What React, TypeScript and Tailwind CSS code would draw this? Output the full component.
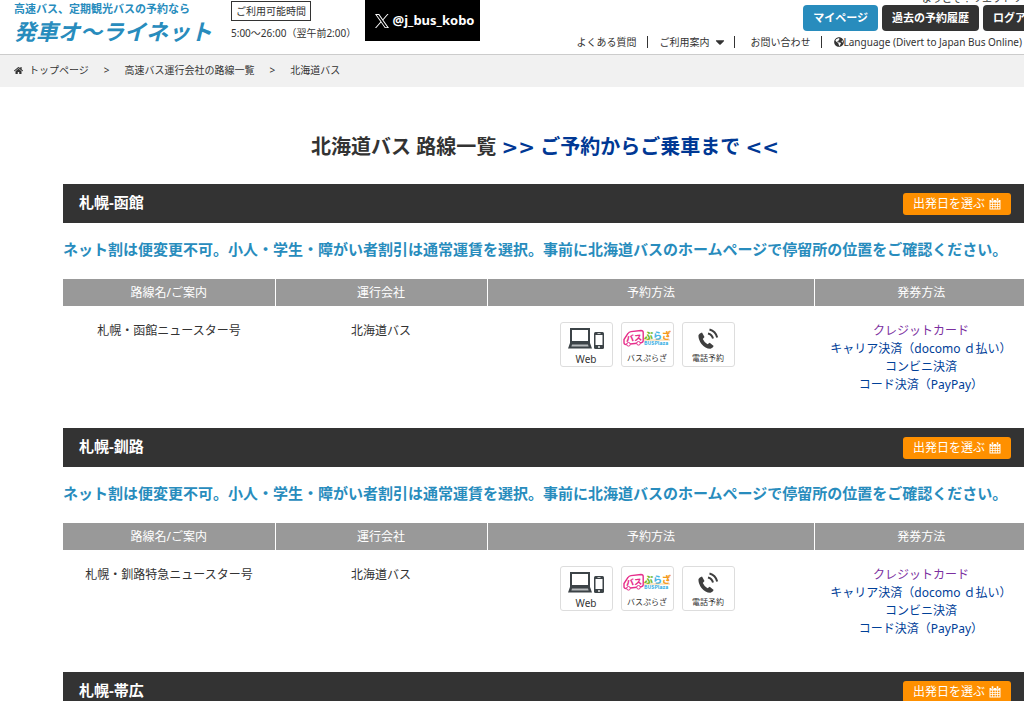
import { FaCaretDown, FaGlobeAmericas, FaHome } from "react-icons/fa";

type Route = {
  id: string;
  section: string;
  name: string;
};

const routes: Route[] = [
  { id: "hakodate", section: "札幌-函館", name: "札幌・函館ニュースター号" },
  { id: "kushiro", section: "札幌-釧路", name: "札幌・釧路特急ニュースター号" },
  { id: "obihiro", section: "札幌-帯広", name: "札幌・帯広特急ニュースター号" },
];

const notice =
  "ネット割は便変更不可。小人・学生・障がい者割引は通常運賃を選択。事前に北海道バスのホームページで停留所の位置をご確認ください。";

const XLogo = () => (
  <svg viewBox="0 0 24 24" className="h-3.5 w-3.5" fill="white" aria-hidden="true">
    <path d="M14.3 10.2 23.2 0h-2.1l-7.7 8.8L7.2 0H0l9.3 13.4L0 24h2.1l8.2-9.3 6.5 9.3H24zM11.4 13.5l-.9-1.3L2.9 1.6h3.3l6 8.6.9 1.3 8 11.2h-3.3z" />
  </svg>
);

const CalendarIcon = () => (
  <svg viewBox="0 0 24 24" className="h-3 w-3" aria-hidden="true">
    <path d="M1 4h22v19H1z" fill="white" />
    <path d="M5 0h4v6H5zM15 0h4v6h-4z" fill="white" stroke="#ff9000" strokeWidth="1" />
    <path
      d="M3 9h3.500v3H3zM8 9h3.500v3H8zM13 9h3.500v3H13zM18 9h3v3h-3zM3 13.500h3.500v3H3zM8 13.500h3.500v3H8zM13 13.500h3.500v3H13zM18 13.500h3v3h-3zM3 18h3.500v3H3zM8 18h3.500v3H8zM13 18h3.500v3H13zM18 18h3v3h-3z"
      fill="#ff9000"
    />
  </svg>
);

const WebIcon = () => (
  <svg viewBox="0 0 36 24" className="h-6 w-9" aria-hidden="true">
    <path d="M3 2h18v13H3z" fill="white" stroke="#3c4347" strokeWidth="2" />
    <path d="M2 16h20l2 5.500H0z" fill="#3c4347" />
    <path d="M4 17.500h16l.600 2H3.400z" fill="#b5b9bb" />
    <rect x="26" y="5" width="10" height="17" rx="1.500" fill="#3c4347" />
    <path d="M27.500 8h7v10h-7z" fill="white" />
    <path d="M29.500 6.500h3" stroke="white" strokeWidth="0.700" />
    <circle cx="31" cy="20" r="0.900" fill="white" />
  </svg>
);

const PlazaIcon = () => (
  <svg viewBox="0 0 48 20" className="h-5 w-12" aria-hidden="true">
    <path
      d="M5 4.500Q6 2.800 8 2.600L18 1.500q2.200 0 2.200 2v8q0 2-2 2.200L3 15.500q-2 0-2-2V10.500z"
      fill="white"
      stroke="#e62e8b"
      strokeWidth="1.400"
    />
    <circle cx="5.500" cy="15.300" r="1.800" fill="white" stroke="#e62e8b" />
    <circle cx="15.500" cy="14.300" r="1.800" fill="white" stroke="#e62e8b" />
    <g fontFamily="Noto Sans CJK JP, sans-serif" fontWeight="900">
      <text x="3" y="12" fontSize="8" fill="#e62e8b" transform="rotate(-5 11 9)">バス</text>
      <text x="21" y="10" fontSize="9">
        <tspan fill="#6cb92d">ぷ</tspan>
        <tspan fill="#4ab5e6">ら</tspan>
        <tspan fill="#f59a1b">ざ</tspan>
      </text>
      <text x="21" y="16" fontSize="5" fill="#4ab5e6">BUSPlaza</text>
    </g>
    <path d="M21 11h26" stroke="#f5b04a" strokeWidth="0.600" />
  </svg>
);

const PhoneIcon = () => (
  <svg viewBox="0 0 22 22" className="h-[22px] w-[22px]" fill="none" aria-hidden="true">
    <path
      d="M1.500 7Q2.500 5 5 4.500l2.500 4.500L5.800 11q1.500 3.500 4.700 5.200l2.200-1.500 4 3.300q-1 2.300-3.200 2.800Q8.500 21 4.500 16 1 11.300 1.500 7z"
      fill="#3f3f3f"
    />
    <path
      d="M11 5.500q4 1 5 5M12.500 1.500q6 1.500 7.700 8"
      stroke="#3f3f3f"
      strokeWidth="2"
    />
  </svg>
);

const methods = [
  { label: "Web", icon: <WebIcon />, size: "text-[10px]" },
  { label: "バスぷらざ", icon: <PlazaIcon />, size: "text-[8px]" },
  { label: "電話予約", icon: <PhoneIcon />, size: "text-[8px]" },
];

const Header = () => (
  <header className="flex h-[55px] items-start justify-between border-b border-[#ccc] pl-3.5 text-[10px]">
    <div className="flex items-start">
      <a href="#" className="block w-[217px] text-[#288cbd]">
        <span className="block pt-px text-[11px] leading-4 font-bold">
          高速バス、定期観光バスの予約なら
        </span>
        <span className="block text-[22px] leading-7 font-bold italic">発車オ～ライネット</span>
      </a>
      <div className="w-[134px]">
        <p className="mt-px inline-block border border-[#333] px-1 leading-[18px]">
          ご利用可能時間
        </p>
        <p className="leading-6 whitespace-nowrap">5:00～26:00（翌午前2:00）</p>
      </div>
      <a
        href="#"
        className="flex h-[41px] w-[115px] items-center justify-center gap-1 bg-black pl-1 text-[13px] font-bold text-white"
      >
        <XLogo />
        @j_bus_kobo
      </a>
    </div>

    <div className="-mt-2 flex flex-col items-end pr-8">
      <p className="pr-9 leading-[13px]">ようこそ！リエットリ</p>
      <div className="flex gap-1 text-[11px] leading-[26px] font-bold text-white">
        <a href="#" className="rounded bg-[#288cbd] px-2.5">マイページ</a>
        <a href="#" className="rounded bg-[#333] px-2.5">過去の予約履歴</a>
        <a href="#" className="rounded bg-[#333] px-2.5">ログアウト</a>
      </div>
      <nav className="flex items-center pr-9 leading-[22px] whitespace-nowrap">
        <a href="#" className="pr-2.5">よくある質問</a>
        <span className="h-3 border-l border-[#333]" />
        <a href="#" className="flex items-center gap-1 pr-2 pl-3">
          ご利用案内
          <FaCaretDown className="h-3.5 w-3" />
        </a>
        <span className="h-3 border-l border-[#333]" />
        <a href="#" className="pr-2.5 pl-4">お問い合わせ</a>
        <span className="h-3 border-l border-[#333]" />
        <a href="#" className="flex items-center pl-3">
          <FaGlobeAmericas className="h-2.5 w-2.5" />
          Language (Divert to Japan Bus Online)
        </a>
      </nav>
    </div>
  </header>
);

const Breadcrumb = () => (
  <nav className="flex h-8 items-center gap-3.5 bg-[#f1f1f1] pb-0.5 pl-3.5 text-[10px]">
    <a href="#" className="flex items-center gap-1.5">
      <FaHome className="h-[9px] w-[9px]" />
      トップページ
    </a>
    <span className="px-px">&gt;</span>
    <a href="#">高速バス運行会社の路線一覧</a>
    <span className="px-px">&gt;</span>
    <span>北海道バス</span>
  </nav>
);

const RouteSection = ({ route }: { route: Route }) => (
  <section className="mb-6">
    <div className="flex h-[39px] items-center justify-between bg-[#333] px-4 text-white">
      <h2 className="pb-0.5 text-[15px] font-bold">{route.section}</h2>
      <button
        type="button"
        className="flex h-[22px] items-center gap-1 rounded-[3px] bg-[#ff9000] px-2.5 text-xs"
      >
        出発日を選ぶ
        <CalendarIcon />
      </button>
    </div>
    <p className="pt-3.5 pb-[18px] text-[15px] leading-6 font-bold whitespace-nowrap text-[#288cbd]">
      {notice}
    </p>
    <table className="w-full table-fixed text-center text-xs">
      <thead className="bg-[#999] text-white">
        <tr className="h-[27px]">
          <th className="w-[22%] border-r border-white font-normal">路線名/ご案内</th>
          <th className="w-[22%] border-r border-white font-normal">運行会社</th>
          <th className="w-[34%] border-r border-white font-normal">予約方法</th>
          <th className="w-[22%] font-normal">発券方法</th>
        </tr>
      </thead>
      <tbody>
        <tr className="align-top leading-[18px]">
          <td className="pt-4">{route.name}</td>
          <td className="pt-4">北海道バス</td>
          <td className="pt-4 pr-2">
            <ul className="flex justify-center gap-2">
              {methods.map((method) => (
                <li
                  key={method.label}
                  className="flex h-[45px] w-[53px] flex-col items-center justify-between rounded-[3px] border border-[#ddd] pt-1"
                >
                  <span className="flex h-6 items-center">{method.icon}</span>
                  <span className={`${method.size} leading-4 whitespace-nowrap`}>
                    {method.label}
                  </span>
                </li>
              ))}
            </ul>
          </td>
          <td className="pt-4 pb-2.5 text-[#004098]">
            <a href="#" className="block text-[#7b2fa0]">クレジットカード</a>
            <a href="#" className="block">キャリア決済（docomo ｄ払い）</a>
            <a href="#" className="block">コンビニ決済</a>
            <a href="#" className="block">コード決済（PayPay）</a>
          </td>
        </tr>
      </tbody>
    </table>
  </section>
);

const App = () => {
  return (
    <div className="overflow-x-hidden bg-white font-['Noto_Sans','Noto_Sans_CJK_JP',sans-serif] text-[#333]">
      <div className="min-w-[1090px]">
        <Header />
        <Breadcrumb />
        <main className="px-[63px]">
          <h1 className="pt-11 pb-[21px] text-center text-xl leading-8 font-bold">
            北海道バス 路線一覧{" "}
            <a href="#" className="text-[#003894]">
              <span className="font-['DejaVu_Sans',sans-serif]">&gt;&gt;</span>{" "}
              ご予約からご乗車まで{" "}
              <span className="font-['DejaVu_Sans',sans-serif]">&lt;&lt;</span>
            </a>
          </h1>
          {routes.map((route) => (
            <RouteSection key={route.id} route={route} />
          ))}
        </main>
      </div>
    </div>
  );
};

export default App;
